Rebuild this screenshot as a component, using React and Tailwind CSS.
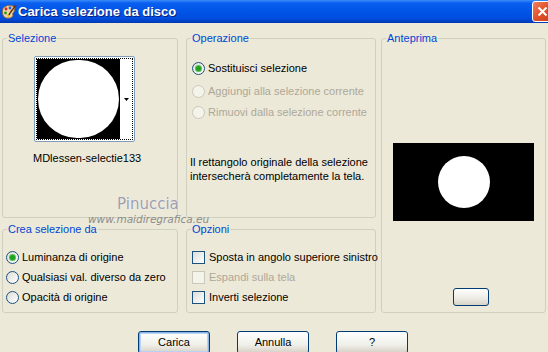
import React from 'react';

const font = "font-['Liberation_Sans',Arial,sans-serif]";

const Group = ({ label, className = '', children }) => (
  <fieldset className={`border border-[#d0d0bf] rounded-[3px] min-w-0 ${className}`}>
    <legend className="ml-[4px] px-[1px] text-[11px] leading-[12px] text-[#0046d5]">{label}</legend>
    {children}
  </fieldset>
);

const Radio = ({ checked, disabled, label }) => (
  <div className="flex items-center h-[20px]">
    <span
      className={`shrink-0 w-[13px] h-[13px] rounded-full border flex items-center justify-center ${
        disabled
          ? 'border-[#cac8bb] bg-[#f5f4ea]'
          : 'border-[#1c5180] bg-[linear-gradient(135deg,#dcdcd7,#ffffff)]'
      }`}
    >
      {checked && <span className="w-[5px] h-[5px] rounded-full bg-[#21a121] shadow-[0_0_0_1px_#55c255]" />}
    </span>
    <span className={`ml-[3px] whitespace-nowrap text-[11px] leading-[13px] ${disabled ? 'text-[#aca899]' : 'text-black'}`}>{label}</span>
  </div>
);

const Check = ({ disabled, label }) => (
  <div className="flex items-center h-[20px]">
    <span
      className={`shrink-0 w-[13px] h-[13px] border ${
        disabled
          ? 'border-[#cac8bb] bg-[#f5f4ea]'
          : 'border-[#1c5180] bg-[linear-gradient(135deg,#dcdcd7,#ffffff)]'
      }`}
    />
    <span className={`ml-[4px] whitespace-nowrap text-[11px] leading-[13px] ${disabled ? 'text-[#aca899]' : 'text-black'}`}>{label}</span>
  </div>
);

const Button = ({ children, primary }) => (
  <button
    className={`w-[72px] h-[23px] rounded-[3px] border border-[#003c74] bg-[linear-gradient(180deg,#ffffff,#f0f0ea_60%,#d6d0c5)] text-[11px] text-black ${
      primary ? 'shadow-[inset_0_0_0_1px_#8db2e3,inset_0_0_0_2px_#b9d1f2]' : ''
    }`}
  >
    {children}
  </button>
);

const AppIcon = () => (
  <svg width="16" height="16" viewBox="0 0 16 16">
    <path d="M2 4 Q6 0 12 2 Q15 4 13 8 Q11 9 12 12 Q10 15 5 14 Q0 12 2 4Z" fill="#f1d3a0" stroke="#8a5a2b" strokeWidth="0.8" />
    <circle cx="5" cy="5" r="1.4" fill="#e02020" />
    <circle cx="9" cy="4" r="1.4" fill="#2060e0" />
    <circle cx="4.5" cy="9" r="1.4" fill="#20a020" />
    <circle cx="7.5" cy="11.5" r="1.3" fill="#f0c000" />
    <path d="M15 1 L9 9" stroke="#6b3a12" strokeWidth="1.6" />
    <path d="M9 9 L8 11" stroke="#333" strokeWidth="1.6" />
  </svg>
);

export default function App() {
  return (
    <div className={`w-[548px] h-[352px] overflow-hidden bg-[#ece9d8] relative ${font}`}>
      {/* title bar */}
      <div className="h-[23px] flex items-center overflow-hidden bg-[linear-gradient(180deg,#3b8cf8_0px,#0a5ff0_3px,#0056e8_10px,#004ee0_18px,#0042c8_21px,#0038b0_23px)]">
        <div className="ml-[1px] mt-[1px]">
          <AppIcon />
        </div>
        <span className="ml-[1px] text-[13px] font-bold text-white [text-shadow:1px_1px_0_#0a1e7a]">
          Carica selezione da disco
        </span>
        <div className="ml-auto mr-[-5px] w-[21px] h-[21px] rounded-[3px] border border-white bg-[linear-gradient(135deg,#f08060,#e0512a_50%,#c8401c)] flex items-center justify-center">
          <svg width="11" height="11" viewBox="0 0 11 11">
            <path d="M1.5 1.5 L9.5 9.5 M9.5 1.5 L1.5 9.5" stroke="white" strokeWidth="2" />
          </svg>
        </div>
      </div>

      {/* groups */}
      <div className="flex pl-[2px] pt-[9px]">
        <div className="flex flex-col w-[176px] gap-[5px]">
          <Group label="Selezione" className="h-[186px]">
            <div className="ml-[31px] mt-[12px] w-[101px] h-[86px] rounded-[2px] border border-[#7f9db9] bg-white p-[1px]">
              <div className="h-full border border-dotted border-black flex">
                <div className="w-[83px] h-full bg-black p-[1px] flex">
                  <div className="flex-1 bg-white rounded-full" />
                </div>
                <div className="flex-1 flex items-center justify-center">
                  <svg width="5" height="3" viewBox="0 0 5 3">
                    <path d="M0 0 H5 L2.5 3Z" fill="black" />
                  </svg>
                </div>
              </div>
            </div>
            <div className="ml-[30px] mt-[10px] text-[11px] leading-[13px] text-black">MDlessen-selectie133</div>
          </Group>
          <Group label="Crea selezione da" className="h-[90px]">
            <div className="ml-[3px] mt-[12px]">
              <Radio checked label="Luminanza di origine" />
              <Radio label="Qualsiasi val. diverso da zero" />
              <Radio label="Opacità di origine" />
            </div>
          </Group>
        </div>

        <div className="flex flex-col w-[190px] ml-[8px] gap-[5px]">
          <Group label="Operazione" className="h-[186px]">
            <div className="ml-[5px] mt-[14px]">
              <div className="h-[23px]">
                <Radio checked label="Sostituisci selezione" />
              </div>
              <div className="h-[21px]">
                <Radio disabled label="Aggiungi alla selezione corrente" />
              </div>
              <Radio disabled label="Rimuovi dalla selezione corrente" />
            </div>
            <p className="ml-[3px] mt-[33px] text-[11px] leading-[14px] text-black">
              Il rettangolo originale della selezione
              <br />
              intersecherà completamente la tela.
            </p>
          </Group>
          <Group label="Opzioni" className="h-[90px]">
            <div className="ml-[5px] mt-[12px]">
              <Check label="Sposta in angolo superiore sinistro" />
              <Check disabled label="Espandi sulla tela" />
              <Check label="Inverti selezione" />
            </div>
          </Group>
        </div>

        <Group label="Anteprima" className="w-[165px] h-[281px] ml-[5px]">
          <div className="ml-[11px] mt-[99px] w-[141px] h-[78px] bg-black flex items-center justify-center">
            <div className="w-[52px] h-[52px] rounded-full bg-white" />
          </div>
          <div className="ml-[71px] mt-[67px] w-[36px] h-[18px] rounded-[3px] border border-[#003c74] bg-[linear-gradient(180deg,#ffffff,#eceae3_60%,#d8d3c8)]" />
        </Group>
      </div>

      {/* buttons */}
      <div className="flex gap-[27px] pl-[138px] mt-[18px]">
        <Button primary>Carica</Button>
        <Button>Annulla</Button>
        <Button>?</Button>
      </div>

      {/* watermark */}
      <div className="absolute left-[117px] top-[195px] text-[15px] leading-[18px] text-[#9d9db0] font-['DejaVu_Sans',sans-serif] [text-shadow:0_0_1px_#ffffff]">
        Pinuccia
      </div>
      <div className="absolute left-[88px] top-[214px] text-[10.5px] leading-[10px] italic text-[#8c8c8c] font-['DejaVu_Sans',sans-serif]">
        www.maidiregrafica.eu
      </div>
    </div>
  );
}
